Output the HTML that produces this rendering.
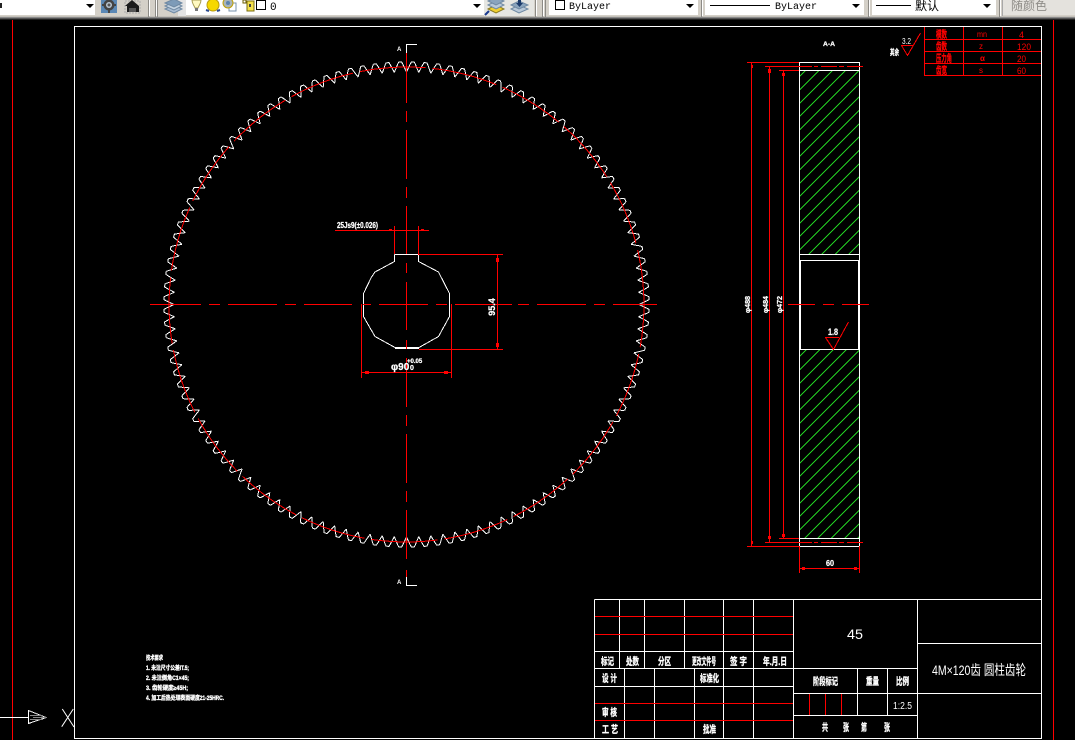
<!DOCTYPE html>
<html lang="zh">
<head>
<meta charset="utf-8">
<title>4M×120齿 圆柱齿轮</title>
<style>
html,body{margin:0;padding:0;background:#000;width:1075px;height:740px;overflow:hidden}
svg{display:block}
text{font-family:"Liberation Sans","Noto Sans CJK SC",sans-serif;fill:#fff}
.c{font-weight:700;font-size:10px;text-anchor:start;stroke:#fff;stroke-width:.35}
.c.r{stroke:#f00}
.r{fill:#f00}
.b{font-weight:700;stroke:#fff;stroke-width:.25}
.m{font-family:"Liberation Mono","Noto Sans CJK SC",monospace;font-size:10px;fill:#000}
</style>
</head>
<body>
<svg width="1075" height="740" viewBox="0 0 1075 740" xmlns="http://www.w3.org/2000/svg">
<defs>
<path id="tooth" d="M0-232.5L3.78-240.47L4.87-242.45L7.83-242.37L8.81-240.34L12.17-232.18" fill="none" stroke="#fff"/>
<g id="t5"><use href="#tooth"/><use href="#tooth" transform="rotate(3)"/><use href="#tooth" transform="rotate(6)"/><use href="#tooth" transform="rotate(9)"/><use href="#tooth" transform="rotate(12)"/></g>
<g id="t20"><use href="#t5"/><use href="#t5" transform="rotate(15)"/><use href="#t5" transform="rotate(30)"/><use href="#t5" transform="rotate(45)"/></g>
<clipPath id="h1"><rect x="799" y="70" width="61" height="184"/></clipPath>
<clipPath id="h2"><rect x="799" y="349" width="61" height="189"/></clipPath>
</defs>
<rect width="1075" height="740" fill="#000"/>

<!-- toolbar -->
<g shape-rendering="crispEdges">
<rect width="1075" height="16" fill="#d4d0c8"/>
<rect y="16" width="1075" height="1" fill="#c4c1ba"/>
<rect y="17" width="1075" height="1" fill="#8a8a8a"/>
<rect y="18" width="1075" height="1" fill="#555"/>
<rect y="19" width="1075" height="1" fill="#222"/>
<rect x="0" width="95" height="15" fill="#fff"/>
<rect x="186" width="298" height="15" fill="#fff"/>
<rect x="178" width="8" height="16" fill="#e4e4e4"/>
<rect x="484" width="50" height="16" fill="#e6e6e2"/>
<rect x="549" width="149" height="15" fill="#fff"/>
<rect x="705" width="159" height="15" fill="#fff"/>
<rect x="872" width="124" height="15" fill="#fff"/>
<rect x="1003" width="72" height="15" fill="#e4e2dd"/>
<rect x="1002" width="1" height="16" fill="#a8a8a8"/>
<path d="M148.500 0V17M155.500 0V17M157.500 0V17M535.500 0V17M542.500 0V17M545.500 0V17M701.500 0V17M868.500 0V17M999.500 0V17" stroke="#8c8a85"/>
<path d="M149.500 0V16M156.500 0V16M536.500 0V16M543.500 0V16M702.500 0V16M869.500 0V16M1000.500 0V16" stroke="#fff"/>
</g>
<path d="M0 3h2v5H0z" fill="#222"/>
<path d="M86 4h8l-4 4zM473 4h8l-4 4zM686 4h8l-4 4zM852 4h8l-4 4zM983 4h8l-4 4z" fill="#000"/>
<!-- gear settings icon -->
<rect x="101" y="0" width="16" height="13" fill="#5b88b5"/>
<circle cx="109" cy="5" r="5.500" fill="#444"/>
<circle cx="109" cy="5" r="3" fill="#b9c6d2"/>
<circle cx="109" cy="5" r="1.500" fill="#555"/>
<path d="M108 10h2v3h-2zM102 4h2v2h-2zM114 4h2v2h-2z" fill="#444"/>
<!-- home icon -->
<rect x="125" y="1" width="15" height="12" fill="none" stroke="#aaa" stroke-dasharray="2 1"/>
<path d="M125 6L132 0L139 6V12H127V6z" fill="#1c1c1c"/>
<path d="M129 12V8H136V12z" fill="#555"/>
<!-- layers -->
<g fill="#a9bdd2" stroke="#6f89a3">
<path d="M165 9L174 5L182 9L174 13z"/>
<path d="M165 6L174 2L182 6L174 10z" fill="#c3d2e0"/>
<path d="M165 3L174 -1L182 3L174 7z" fill="#7d9bb8"/>
</g>
<!-- bulb -->
<path d="M192 0H201C201 4 199 5 198 8H195C194 5 192 4 192 0z" fill="#fff9c0" stroke="#a79c54"/>
<rect x="195" y="8" width="3" height="3" fill="#777"/>
<!-- sun -->
<circle cx="213" cy="5" r="6" fill="#f6d800" stroke="#b89c10"/>
<path d="M206 10l3 1M220 10l-3 1" stroke="#2a4a90" stroke-width="2"/>
<!-- freeze -->
<rect x="229" y="3" width="7" height="8" fill="#fff" stroke="#7a93ad"/>
<circle cx="228" cy="3" r="5" fill="#a9b4b8" stroke="#c0a000"/>
<circle cx="228" cy="3" r="2" fill="#5c83ad"/>
<!-- lock -->
<path d="M243 0h3v3h-3z" fill="none" stroke="#6b5b00"/>
<rect x="247" y="1" width="7" height="10" fill="#f3e04c" stroke="#7a6c10"/>
<rect x="249" y="4" width="2" height="3" fill="#444"/>
<rect x="256.500" y="0.500" width="9" height="9" fill="#fff" stroke="#000" shape-rendering="crispEdges"/>
<text x="270" y="10" class="m" style="font-size:11px">0</text>
<!-- layer icons -->
<path d="M488 9L496 5L504 9L496 13z" fill="#f0cf30" stroke="#8a7a20"/>
<path d="M488 5L496 1L504 5L496 9z" fill="#b8c8d8" stroke="#6f89a3"/>
<path d="M488 1L496 -3L504 1L496 5z" fill="#8aa4bd" stroke="#6f89a3"/>
<path d="M485 15l4-4" stroke="#1a3a90" stroke-width="2"/>
<path d="M511 9L519 5L528 9L519 13z" fill="#b8c8d8" stroke="#6f89a3"/>
<path d="M511 5L519 1L528 5L519 9z" fill="#8aa4bd" stroke="#6f89a3"/>
<path d="M518 0h3v3h2l-3.500 4L516 3h2z" fill="#1b3a6a"/>
<rect x="555.500" y="0.500" width="9" height="9" fill="#fff" stroke="#000" shape-rendering="crispEdges"/>
<text x="569" y="9" class="m">ByLayer</text>
<path d="M710 5.500H770" stroke="#000" shape-rendering="crispEdges"/>
<text x="775" y="9" class="m">ByLayer</text>
<path d="M876 5.500H911" stroke="#000" shape-rendering="crispEdges"/>
<text x="915" y="10" style="font-size:12px;fill:#000">默认</text>
<text x="1011" y="10" style="font-size:12px;fill:#8f8d88">随颜色</text>

<!-- red page border -->
<g shape-rendering="crispEdges" fill="none">
<path d="M12.500 20V740M1053.500 20V740" stroke="#f00"/>
<rect x="74.500" y="26.500" width="967" height="712" stroke="#fff"/>

<!-- gear -->
<g transform="translate(406.500 304.500)">
<use href="#t20"/><use href="#t20" transform="rotate(60)"/><use href="#t20" transform="rotate(120)"/><use href="#t20" transform="rotate(180)"/><use href="#t20" transform="rotate(240)"/><use href="#t20" transform="rotate(300)"/>
</g>
<circle cx="406.500" cy="304.500" r="237.500" stroke="#f00" stroke-dasharray="66 7" stroke-dashoffset="-50"/>

<!-- bore -->
<path d="M394.500 254.500H418.500M394.500 254.500V261.500L375 272L371.500 277L363.500 293.500V316.500L375 336.500L395 347.500H419L438.500 336.500L449.500 316.500V293.500L438.500 272L418.500 261.500V254.500" stroke="#fff"/>
<path d="M395 348.500H419" stroke="#fff"/>

<!-- centre lines -->
<path stroke="#f00" d="M150 304.500H201M209 304.500H220M228 304.500H277M285 304.500H296M304 304.500H352M363 304.500H371M379 304.500H428M436 304.500H447M455 304.500H512M518 304.500H529M537 304.500H586M594 304.500H605M613 304.500H657"/>
<path stroke="#f00" d="M406.500 53V103M406.500 111V122M406.500 130V179M406.500 187V198M406.500 206V254M406.500 263V273M406.500 282V330M406.500 340V349M406.500 358V407M406.500 415V426M406.500 434V483M406.500 491V502M406.500 510V559M406.500 570V577"/>
<path stroke="#fff" d="M406.500 53V44.500H417M406.500 577V585.500H417"/>

<!-- bore dims -->
<path stroke="#f00" d="M394.500 226V254M418.500 226V254M335 230.500H429M418 254.500H503M419 349.500H503M497.500 254V349M361.500 304V378M451.500 304V378M361 372.500H452"/>
<path fill="#f00" d="M496 258h3v4h-3zM496 343h3v4h-3zM365 371h4v3h-4zM444 371h4v3h-4zM389 229h3v1h-3zM421 229h3v1h-3z"/>

<!-- side view -->
<path stroke="#22cc22" clip-path="url(#h1)" d="M799.500 76.700l60-60M799.500 90l60-60M799.500 103.300l60-60M799.500 116.700l60-60M799.500 130l60-60M799.500 143.300l60-60M799.500 156.700l60-60M799.500 170l60-60M799.500 183.300l60-60M799.500 196.700l60-60M799.500 210l60-60M799.500 223.300l60-60M799.500 236.700l60-60M799.500 250l60-60M799.500 263.300l60-60M799.500 276.700l60-60M799.500 290l60-60M799.500 303.300l60-60"/>
<path stroke="#22cc22" clip-path="url(#h2)" d="M799.500 356.700l60-60M799.500 370l60-60M799.500 383.300l60-60M799.500 396.700l60-60M799.500 410l60-60M799.500 423.300l60-60M799.500 436.700l60-60M799.500 450l60-60M799.500 463.300l60-60M799.500 476.700l60-60M799.500 490l60-60M799.500 503.300l60-60M799.500 516.700l60-60M799.500 530l60-60M799.500 543.300l60-60M799.500 556.700l60-60M799.500 570l60-60M799.500 583.300l60-60M799.500 596.700l60-60"/>
<path stroke="#fff" d="M799.500 62.500H859.500V546.500H799.500zM799.500 70.500H859.500M799.500 254.500H859.500M799.500 349.500H859.500M799.500 538.500H859.500"/>
<path stroke="#fff" d="M800.500 349V260.500H858.500V349"/>
<path stroke="#f00" d="M747 62.500H799M779 70.500H799M747 546.500H799M779 538.500H799M751.500 62V546M769.500 66V542M783.500 70V538"/>
<path stroke="#f00" d="M765 66.500H812M814 66.500H818M821 66.500H837M839 66.500H844M847 66.500H863M765 542.500H812M814 542.500H818M821 542.500H837M839 542.500H844M847 542.500H863M788 304.500H815M823 304.500H834M842 304.500H869"/>
<path stroke="#f00" d="M799.500 546V573M859.500 546V573M799 568.500H860"/>
<path fill="#f00" d="M768 69h3v4h-3zM782 73h3v3h-3zM751 65h2v3h-2zM768 536h3v3h-3zM782 534h3v3h-3zM751 541h2v3h-2zM802 567h3v3h-3zM854 567h3v3h-3z"/>

<!-- roughness -->
<path stroke="#f00" d="M901 45.500H913M901.500 45.500L907.500 55.500L920.500 33M825 337.500H839M825.500 337.500L833.500 349.500L848.500 322"/>

<!-- parameter table -->
<path stroke="#f00" d="M924.500 27V76M963.500 27V76M1002.500 27V76M924 39.500H1041M924 51.500H1041M924 63.500H1041M924 75.500H1041"/>

<!-- title block -->
<path stroke="#fff" d="M594.500 599.500H1041M594.500 599.500V738M619.500 599.500V668M644.500 599.500V668M684.500 599.500V668M723.500 599.500V738M753.500 599.500V738M793.500 599.500V738M917.500 599.500V738M594 651.500H793M594 668.500H917M594 686.500H793M624.500 668V738M654.500 668V738M694.500 668V738M793 693.500H1041M793 715.500H917M857.500 668V715M887.500 668V715M917 643.500H1041"/>
<path stroke="#f00" d="M595 616.500H793M595 634.500H793M595 703.500H793M595 720.500H793M809.500 694V715M825.500 694V715M841.500 694V715"/>

<!-- UCS -->
<path stroke="#fff" d="M0 717.500H28M28.500 710.500V723.500L46 717.500z"/>
<path stroke="#888" d="M30 715.500H43M30 719.500H43M33 717.500H47"/>
</g>
<path stroke="#fff" d="M62.300 709L74 727M61.700 726.700L73.300 709" fill="none"/>

<!-- labels -->
<text x="397" y="51" style="font-size:6px;font-weight:700">A</text>
<text x="397" y="584" style="font-size:6px;font-weight:700">A</text>
<text x="337" y="228" class="b" style="font-size:8px" textLength="41" lengthAdjust="spacingAndGlyphs">25Js9(±0.026)</text>
<text transform="translate(495 307) rotate(-90)" text-anchor="middle" class="b" style="font-size:9px">95.4</text>
<text x="391" y="370" class="b" style="font-size:10px">φ90</text>
<text x="407" y="363" class="b" style="font-size:6px">+0.05</text>
<text x="410" y="370" class="b" style="font-size:7px">0</text>
<text x="823" y="46" class="b" style="font-size:6px" textLength="12" lengthAdjust="spacingAndGlyphs">A-A</text>
<text x="902" y="44" style="font-size:8px" textLength="9" lengthAdjust="spacingAndGlyphs">3.2</text>
<text x="890" y="55" class="c" style="font-size:8px" textLength="9" lengthAdjust="spacingAndGlyphs">其余</text>
<text x="828" y="335" class="b" style="font-size:9px" textLength="10" lengthAdjust="spacingAndGlyphs">1.8</text>
<text transform="translate(750 313) rotate(-90)" class="b" style="font-size:7px" textLength="17" lengthAdjust="spacingAndGlyphs">φ488</text>
<text transform="translate(768 313) rotate(-90)" class="b" style="font-size:7px" textLength="17" lengthAdjust="spacingAndGlyphs">φ484</text>
<text transform="translate(782 313) rotate(-90)" class="b" style="font-size:7px" textLength="17" lengthAdjust="spacingAndGlyphs">φ472</text>
<text x="826" y="566" class="b" style="font-size:8px" textLength="8" lengthAdjust="spacingAndGlyphs">60</text>

<!-- parameter text -->
<g>
<text x="936" y="38" class="c r" textLength="11" lengthAdjust="spacingAndGlyphs">模数</text>
<text x="977" y="37" class="r" style="font-size:8px" textLength="10" lengthAdjust="spacingAndGlyphs">mn</text>
<text x="1019" y="38" class="r" style="font-size:9px">4</text>
<text x="936" y="50" class="c r" textLength="11" lengthAdjust="spacingAndGlyphs">齿数</text>
<text x="979" y="49" class="r" style="font-size:8px">z</text>
<text x="1017" y="50" class="r" style="font-size:9px" textLength="14" lengthAdjust="spacingAndGlyphs">120</text>
<text x="936" y="62" class="c r" textLength="16" lengthAdjust="spacingAndGlyphs">压力角</text>
<text x="980" y="61" class="r" style="font-size:8px;font-weight:700">α</text>
<text x="1017" y="62" class="r" style="font-size:9px" textLength="9" lengthAdjust="spacingAndGlyphs">20</text>
<text x="936" y="74" class="c r" textLength="11" lengthAdjust="spacingAndGlyphs">齿宽</text>
<text x="979" y="73" class="r" style="font-size:8px">s</text>
<text x="1017" y="74" class="r" style="font-size:9px" textLength="9" lengthAdjust="spacingAndGlyphs">60</text>
</g>

<!-- title block text -->
<text x="847" y="639" style="font-size:14px" textLength="16" lengthAdjust="spacingAndGlyphs">45</text>
<text x="932" y="675" style="font-size:14px" textLength="94" lengthAdjust="spacingAndGlyphs">4M×120齿 圆柱齿轮</text>
<text x="601" y="665" class="c" textLength="13" lengthAdjust="spacingAndGlyphs">标记</text>
<text x="626" y="665" class="c" textLength="13" lengthAdjust="spacingAndGlyphs">处数</text>
<text x="658" y="665" class="c" textLength="13" lengthAdjust="spacingAndGlyphs">分区</text>
<text x="692" y="665" class="c" textLength="24" lengthAdjust="spacingAndGlyphs">更改文件号</text>
<text x="730" y="665" class="c" textLength="17" lengthAdjust="spacingAndGlyphs">签 字</text>
<text x="763" y="665" class="c" textLength="24" lengthAdjust="spacingAndGlyphs">年.月.日</text>
<text x="602" y="682" class="c" textLength="15" lengthAdjust="spacingAndGlyphs">设 计</text>
<text x="700" y="682" class="c" textLength="19" lengthAdjust="spacingAndGlyphs">标准化</text>
<text x="602" y="716" class="c" textLength="15" lengthAdjust="spacingAndGlyphs">审 核</text>
<text x="602" y="733" class="c" textLength="16" lengthAdjust="spacingAndGlyphs">工 艺</text>
<text x="703" y="733" class="c" textLength="13" lengthAdjust="spacingAndGlyphs">批准</text>
<text x="813" y="685" class="c" textLength="25" lengthAdjust="spacingAndGlyphs">阶段标记</text>
<text x="866" y="685" class="c" textLength="13" lengthAdjust="spacingAndGlyphs">重量</text>
<text x="896" y="685" class="c" textLength="13" lengthAdjust="spacingAndGlyphs">比例</text>
<text x="893" y="709" style="font-size:10px" textLength="19" lengthAdjust="spacingAndGlyphs">1:2.5</text>
<text x="822" y="731" class="c" textLength="6" lengthAdjust="spacingAndGlyphs">共</text>
<text x="843" y="731" class="c" textLength="6" lengthAdjust="spacingAndGlyphs">张</text>
<text x="861" y="731" class="c" textLength="6" lengthAdjust="spacingAndGlyphs">第</text>
<text x="884" y="731" class="c" textLength="6" lengthAdjust="spacingAndGlyphs">张</text>

<!-- technical requirements -->
<text x="146" y="660" class="c" style="font-size:6px" textLength="17" lengthAdjust="spacingAndGlyphs">技术要求</text>
<text x="146" y="670" class="c" style="font-size:6px" textLength="43" lengthAdjust="spacingAndGlyphs">1. 未注尺寸公差IT.5;</text>
<text x="146" y="680" class="c" style="font-size:6px" textLength="43" lengthAdjust="spacingAndGlyphs">2. 未注倒角C1×45;</text>
<text x="146" y="690" class="c" style="font-size:6px" textLength="42" lengthAdjust="spacingAndGlyphs">3. 齿轮硬度≥45H;</text>
<text x="146" y="700" class="c" style="font-size:6px" textLength="78" lengthAdjust="spacingAndGlyphs">4. 加工后热处理表面硬度21-25HRC.</text>
</svg>
</body>
</html>
